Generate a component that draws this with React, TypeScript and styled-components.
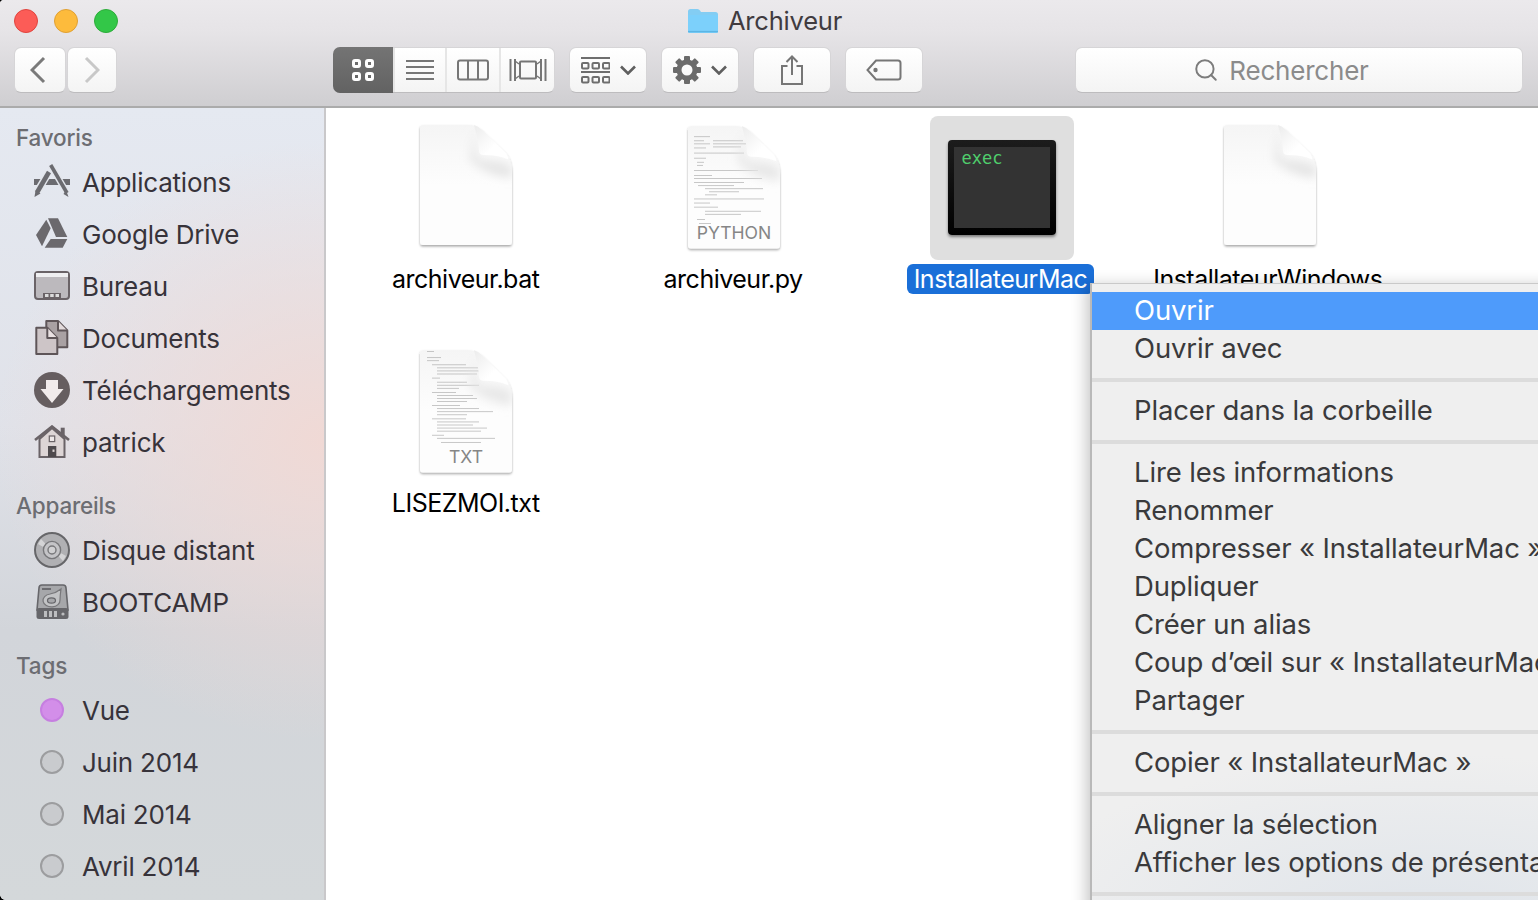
import { useId } from "react";
import styled, { createGlobalStyle } from "styled-components";
import { Search } from "lucide-react";

const GlobalStyle = createGlobalStyle`
  html, body {
    margin: 0;
    padding: 0;
    background: #000;
    overflow: hidden;
  }
  * { box-sizing: border-box; }
  body {
    font-family: Inter, "Liberation Sans", sans-serif;
  }
`;

const Window = styled.div`
  position: relative;
  width: 1538px;
  height: 900px;
  overflow: hidden;
  border-radius: 4px 0 0 6px;
  background: #fff;
  display: flex;
  flex-direction: column;
`;

const Toolbar = styled.header`
  height: 108px;
  flex: none;
  background: linear-gradient(#ebe9ec, #e6e4e7 30%, #cfced1);
  border-bottom: 2px solid #ababab;
  display: flex;
  flex-direction: column;
`;

const TitleRow = styled.div`
  height: 47px;
  padding: 9px 0 0 14px;
  display: grid;
  grid-template-columns: 1fr auto 1fr;
  align-items: start;
`;

const Lights = styled.div`
  display: flex;
  gap: 16px;
`;

const Light = styled.span<{ $bg: string; $line: string }>`
  width: 24px;
  height: 24px;
  border-radius: 50%;
  background: ${(p) => p.$bg};
  border: 1px solid ${(p) => p.$line};
`;

const Title = styled.div`
  display: flex;
  align-items: center;
  gap: 10px;
  margin-right: 22px;
  margin-top: -1px;
  font-size: 25.5px;
  line-height: 26px;
  color: #403b3f;
  letter-spacing: -0.2px;
`;

const Controls = styled.div`
  height: 46px;
  padding: 0 15px 0 14px;
  display: flex;
  align-items: stretch;
`;

const Btn = styled.div<{ $w?: number; $ml?: number; $gap?: number; $pr?: number }>`
  width: ${(p) => p.$w ?? 78}px;
  margin-left: ${(p) => p.$ml ?? 14}px;
  padding-right: ${(p) => p.$pr ?? 0}px;
  gap: ${(p) => p.$gap ?? 0}px;
  display: flex;
  align-items: center;
  justify-content: center;
  background: linear-gradient(#ffffff, #f4f4f4);
  border: 1px solid #d6d5d7;
  border-bottom-color: #bdbcbe;
  border-radius: 7px;
`;

const ViewGroup = styled.div`
  width: 222px;
  margin-left: 216px;
  display: flex;
  background: linear-gradient(#ffffff, #f4f4f4);
  border: 1px solid #d6d5d7;
  border-bottom-color: #bdbcbe;
  border-radius: 7px;
`;

const ViewCell = styled.div<{ $w: number; $on?: boolean }>`
  width: ${(p) => p.$w}px;
  flex: none;
  display: flex;
  align-items: center;
  justify-content: center;
  margin: ${(p) => (p.$on ? "-1px 0 -1px -1px" : "0")};
  border-radius: ${(p) => (p.$on ? "7px 0 0 7px" : "0")};
  background: ${(p) => (p.$on ? "linear-gradient(#747474, #626262)" : "none")};
  & + & {
    border-left: 2px solid #e6e6e6;
  }
`;

const SearchBox = styled(Btn)`
  flex: 1;
  width: auto;
  margin-left: 152px;
  gap: 10px;
  color: #8b8b8b;
  font-size: 26px;
  letter-spacing: -0.2px;
  padding-right: 36px;
`;

const Body = styled.div`
  flex: 1;
  min-height: 0;
  display: flex;
`;

const Sidebar = styled.nav`
  width: 326px;
  flex: none;
  padding-top: 10px;
  border-right: 2px solid #c9c8ca;
  background:
    radial-gradient(ellipse 330px 300px at 100% 42%, #f0d9d5 0%, rgba(240, 217, 213, 0) 100%),
    linear-gradient(#e5e9f1 0%, #e0e2e9 40%, #d2d5da 66%, #d4d8da 100%);
  display: flex;
  flex-direction: column;
  gap: 18px;
`;

const SideHead = styled.div`
  height: 38px;
  padding-left: 16px;
  display: flex;
  align-items: center;
  font-size: 22.5px;
  font-weight: 500;
  color: #6c6d72;
  letter-spacing: -0.2px;
`;

const SideRow = styled.div`
  height: 52px;
  padding-left: 34px;
  display: flex;
  align-items: center;
  gap: 12px;
  font-size: 26px;
  color: #37333a;
  letter-spacing: -0.22px;
`;

const IconBox = styled.span`
  width: 36px;
  height: 36px;
  flex: none;
  display: flex;
  align-items: center;
  justify-content: center;
`;

const TagDot = styled.span<{ $color?: string }>`
  width: 24px;
  height: 24px;
  border-radius: 50%;
  background: ${(p) => p.$color ?? "#c9cbce"};
  border: 2px solid ${(p) => (p.$color ? "#c67fe0" : "#9c9d9f")};
`;

const Files = styled.main`
  flex: 1;
  padding: 8px 0 0 6px;
  display: grid;
  grid-template-columns: repeat(4, 267.4px);
  grid-auto-rows: 224px;
  align-content: start;
`;

const FileItem = styled.div`
  display: flex;
  flex-direction: column;
  align-items: center;
`;

const Thumb = styled.div<{ $selected?: boolean; $nudge?: number }>`
  width: 144px;
  height: 144px;
  flex: none;
  margin-left: ${(p) => p.$nudge ?? 0}px;
  border-radius: 8px;
  background: ${(p) => (p.$selected ? "#dfdfdf" : "transparent")};
  display: flex;
  align-items: center;
  justify-content: center;
`;

const FileName = styled.div<{ $selected?: boolean }>`
  margin-top: 4px;
  height: 30px;
  padding: 0 7px;
  border-radius: 6px;
  font-size: 25px;
  line-height: 30px;
  white-space: nowrap;
  letter-spacing: -0.5px;
  color: ${(p) => (p.$selected ? "#fff" : "#000")};
  background: ${(p) => (p.$selected ? "#1a6fd8" : "transparent")};
`;

const Terminal = styled.div`
  width: 108px;
  height: 95px;
  margin-top: -2px;
  padding: 7px 6px;
  border-radius: 4px;
  background: linear-gradient(#1c1c1c, #000);
  box-shadow: 0 2px 3px rgba(0, 0, 0, 0.45);
  display: flex;
`;

const TerminalScreen = styled.div`
  flex: 1;
  background: #333;
  padding: 0 7px;
  color: #4fce6c;
  font-family: "DejaVu Sans Mono", monospace;
  font-size: 17px;
  line-height: 22px;
`;

const Menu = styled.div`
  position: absolute;
  left: 1090px;
  top: 283px;
  width: 520px;
  height: 640px;
  padding-top: 8px;
  background:
    radial-gradient(ellipse 420px 170px at 65% 100%, #dfe4ea 0%, rgba(223, 228, 234, 0) 100%),
    #efefef;
  border-left: 2px solid #b9b9b9;
  border-top: 1px solid #c9c9c9;
  box-shadow: -4px 2px 14px rgba(0, 0, 0, 0.22);
  font-size: 27.5px;
  color: #3a3a3c;
  letter-spacing: -0.14px;
`;

const MenuItem = styled.div<{ $active?: boolean }>`
  height: 38px;
  padding: 0 0 2px 42px;
  display: flex;
  align-items: center;
  white-space: nowrap;
  color: ${(p) => (p.$active ? "#fff" : "inherit")};
  background: ${(p) => (p.$active ? "#4e9bfb" : "none")};
`;

const MenuLine = styled.div`
  height: 4px;
  margin: 10px 0;
  background: #dcdcdc;
`;

const GREY = "#6a6367";

function FolderIcon() {
  return (
    <svg width="30" height="24" viewBox="0 0 30 24">
      <path d="M0 2.5Q0 0 2.5 0H9.5Q11 0 12 1.5L13 3H27.5Q30 3 30 5.5V22Q30 24 28 24H2Q0 24 0 22Z" fill="#83cdf3" />
      <path d="M0 6H30V22Q30 24 28 24H2Q0 24 0 22Z" fill="#7cd0fb" />
      <path d="M0 22.6H30" stroke="#5cb5e4" strokeWidth="1.4" />
    </svg>
  );
}

function Chevron({ dir, color }: { dir: "l" | "r"; color: string }) {
  return (
    <svg width="16" height="28" viewBox="0 0 16 28">
      <path d={dir === "l" ? "M14 2L2 14L14 26" : "M2 2L14 14L2 26"} fill="none" stroke={color} strokeWidth="3" />
    </svg>
  );
}

function SmallChevron() {
  return (
    <svg width="16" height="10" viewBox="0 0 16 10">
      <path d="M1 1.5L8 8.5L15 1.5" fill="none" stroke="#5f5f5f" strokeWidth="2.6" />
    </svg>
  );
}

function GridIcon() {
  return (
    <svg width="22" height="22" viewBox="0 0 22 22" fill="none" stroke="#fff" strokeWidth="3">
      <rect x="1.5" y="1.5" width="6" height="6" rx="1.5" />
      <rect x="14.5" y="1.5" width="6" height="6" rx="1.5" />
      <rect x="1.5" y="14.5" width="6" height="6" rx="1.5" />
      <rect x="14.5" y="14.5" width="6" height="6" rx="1.5" />
    </svg>
  );
}

function ListIcon() {
  return (
    <svg width="28" height="22" viewBox="0 0 28 22" stroke="#767676" strokeWidth="2">
      {[2, 8, 14, 20].map((y) => (
        <path key={y} d={`M0 ${y}H28`} />
      ))}
    </svg>
  );
}

function ColumnsIcon() {
  return (
    <svg width="32" height="22" viewBox="0 0 32 22" fill="none" stroke="#767676" strokeWidth="2">
      <rect x="1" y="1.5" width="30" height="19" rx="2" />
      <path d="M11 1.5V20.5M21 1.5V20.5" />
    </svg>
  );
}

function CoverIcon() {
  return (
    <svg width="38" height="24" viewBox="0 0 38 24" fill="none" stroke="#767676" strokeWidth="2">
      <rect x="11" y="3.5" width="16" height="17" rx="1" />
      <path d="M1.5 1V23M6 1V23M32 1V23M36.5 1V23" />
      <path d="M6 3L10 6M6 21L10 18M32 3L28 6M32 21L28 18" strokeWidth="1.4" />
    </svg>
  );
}

function ArrangeIcon() {
  const cells = [0, 10.5, 21];
  return (
    <svg width="29" height="27" viewBox="0 0 29 27" fill="none" stroke="#6e6e6e" strokeWidth="2">
      <path d="M0 1H29M0 15H29" />
      {cells.map((x) => (
        <rect key={`a${x}`} x={x + 1} y="6" width="6.5" height="5.5" rx="1" />
      ))}
      {cells.map((x) => (
        <rect key={`b${x}`} x={x + 1} y="20" width="6.5" height="5.5" rx="1" />
      ))}
    </svg>
  );
}

function GearIcon() {
  const teeth = [0, 45, 90, 135, 180, 225, 270, 315];
  return (
    <svg width="28" height="28" viewBox="0 0 28 28">
      {teeth.map((a) => (
        <rect key={a} x="11" y="0" width="6" height="7" rx="1" fill="#6b6b6b" transform={`rotate(${a} 14 14)`} />
      ))}
      <circle cx="14" cy="14" r="8" fill="none" stroke="#6b6b6b" strokeWidth="5" />
    </svg>
  );
}

function ShareIcon() {
  return (
    <svg width="24" height="30" viewBox="0 0 24 30" fill="none" stroke="#767676" strokeWidth="2">
      <path d="M7.5 11H2V29H22V11H16.5" />
      <path d="M12 20V1.5M6.5 7L12 1.5L17.5 7" />
    </svg>
  );
}

function TagIcon() {
  return (
    <svg width="36" height="22" viewBox="0 0 36 22" fill="none" stroke="#767676" strokeWidth="2">
      <path d="M10 1.5H32Q34.5 1.5 34.5 4V18Q34.5 20.5 32 20.5H10L1.5 11Z" />
      <circle cx="9.5" cy="11" r="1.2" fill="#767676" />
    </svg>
  );
}

function AppsIcon() {
  return (
    <svg width="36" height="36" viewBox="0 0 36 36" fill="none">
      <rect x="0" y="15" width="36" height="6" fill="#6b6b70" />
      <path d="M16.7 1L33.5 30" stroke="#e3e6ec" strokeWidth="6.5" />
      <path d="M15 8L2.5 29" stroke="#e3e6ec" strokeWidth="7.5" />
      <path d="M16.7 1L33 29" stroke="#6b6b70" strokeWidth="3.6" />
      <path d="M32 26L34.5 33L29.5 30Z" fill="#6b6b70" />
      <path d="M15 8L3 28.5" stroke="#6b6b70" strokeWidth="4.6" />
      <path d="M0.5 33L1.5 26.5L6.5 29.5Z" fill="#6b6b70" />
    </svg>
  );
}

function DriveIcon() {
  return (
    <svg width="36" height="36" viewBox="0 0 36 36" fill="#6b696d">
      <path d="M14 2.3H24L33.3 21H22Z" />
      <path d="M16.7 23H33.3L28.7 31.7H10.7Z" />
      <path d="M12.3 3.7L16.7 12.3L8 30.3L2 19Z" />
    </svg>
  );
}

function DesktopIcon() {
  return (
    <svg width="36" height="30" viewBox="0 0 36 30">
      <rect x="1" y="1" width="34" height="27" rx="3" fill="#bcb9bd" stroke={GREY} strokeWidth="2" />
      <rect x="2" y="2" width="32" height="4" fill="#efeff1" />
      <rect x="9" y="22" width="18" height="5" fill={GREY} />
      <rect x="11" y="23" width="3.5" height="3" fill="#ddd" />
      <rect x="16.2" y="23" width="3.5" height="3" fill="#ddd" />
      <rect x="21.5" y="23" width="3.5" height="3" fill="#ddd" />
    </svg>
  );
}

function DocsIcon() {
  return (
    <svg width="36" height="36" viewBox="0 0 36 36" stroke="#5e5558" strokeWidth="2" strokeLinejoin="round">
      <path d="M12.3 1H24L33.3 10.5V27.3H20V17.5L12.3 8Z" fill="#a9a1a3" />
      <path d="M24 1V10.5H33.3" fill="#e2dadb" />
      <path d="M2.3 7.7H13.3L23.3 18V34H2.3Z" fill="#cdc5c7" />
      <path d="M13.3 7.7V18H23.3" fill="#e9e1e2" />
    </svg>
  );
}

function DownloadIcon() {
  return (
    <svg width="36" height="36" viewBox="0 0 36 36">
      <circle cx="18" cy="18" r="18" fill="#665e60" />
      <path d="M12 8H24V17H29.5L18 31L6.5 17H12Z" fill="#f1ebeb" />
    </svg>
  );
}

function HomeIcon() {
  return (
    <svg width="36" height="34" viewBox="0 0 36 34">
      <rect x="26.7" y="2.7" width="4" height="9" fill={GREY} />
      <path d="M5.5 14V32H30.5V14L18 3Z" fill="#ddd5d5" stroke={GREY} strokeWidth="2" />
      <path d="M1 15L18 1.5L35 15" fill="none" stroke={GREY} strokeWidth="2.6" />
      <rect x="14" y="21" width="8.3" height="11" fill="#4f4a4d" />
      <rect x="18.5" y="24.5" width="2" height="2.4" fill="#ddd5d5" />
      <rect x="15.3" y="11" width="5.4" height="5.6" fill="#eee8e8" stroke={GREY} strokeWidth="1.2" />
    </svg>
  );
}

function DiscIcon() {
  return (
    <svg width="36" height="36" viewBox="0 0 36 36" fill="none">
      <circle cx="18" cy="18" r="17" fill="#b0b0b3" stroke="#666669" strokeWidth="2" />
      <path d="M7 7L14 14.5L11 16L4 12Z" fill="#d4d4d6" />
      <path d="M29 29L22 21.5L25 20L32 24Z" fill="#d4d4d6" />
      <circle cx="18" cy="18" r="8.6" fill="#c4c4c7" stroke="#77777a" strokeWidth="1.4" />
      <circle cx="18" cy="18" r="4" fill="#d0d0d2" stroke="#77777a" strokeWidth="1.4" />
    </svg>
  );
}

function DriveDiskIcon() {
  return (
    <svg width="33" height="36" viewBox="0 0 33 36">
      <path d="M6 1H27Q30 1 30 4L32 26H1L3 4Q3 1 6 1Z" fill="#a6a7aa" stroke="#66666a" strokeWidth="1.6" />
      <rect x="0.5" y="24" width="32" height="11" rx="2.5" fill="#66666a" />
      <rect x="8" y="27" width="3" height="6" fill="#bcbdbf" />
      <rect x="13" y="27" width="3" height="6" fill="#bcbdbf" />
      <rect x="18" y="27" width="3" height="6" fill="#bcbdbf" />
      <circle cx="27" cy="30" r="1.6" fill="#bcbdbf" />
      <path d="M6 5H15" stroke="#66666a" strokeWidth="1.8" />
      <path d="M25 5Q24 12 24 16A8.5 6.5 0 1 1 14 10Q20 9 25 5Z" fill="#c2c3c5" stroke="#77777a" strokeWidth="1.2" />
      <ellipse cx="15.5" cy="16.5" rx="4" ry="2.6" fill="#a6a7aa" stroke="#66666a" strokeWidth="1.2" />
    </svg>
  );
}

const PY_LINES = [
  [3, 15, 16], [3, 19, 10], [3, 22, 16], [22, 19, 30], [22, 22, 34], [22, 25, 28], [3, 26, 12],
  [3, 31, 50], [3, 36, 12], [6, 40, 7], [6, 43, 6], [3, 48, 64], [3, 53, 18], [3, 56, 68],
  [3, 60, 50], [7, 63, 36], [14, 66, 58], [18, 69, 30], [14, 72, 12], [3, 76, 70], [3, 80, 16],
  [3, 84, 24], [14, 88, 56], [14, 91, 36], [6, 96, 8], [8, 100, 12],
];

const TXT_LINES = [
  [4, 6, 7], [4, 12, 14], [4, 15, 12], [9, 19, 34], [14, 22, 46], [14, 25, 44], [14, 28, 40],
  [9, 32, 8], [14, 36, 30], [14, 39, 42], [14, 42, 22], [9, 46, 24], [14, 49, 36], [14, 52, 40],
  [14, 55, 30], [9, 59, 28], [14, 62, 42], [14, 65, 56], [14, 68, 30], [9, 72, 34], [14, 75, 42],
  [14, 78, 36], [14, 81, 50], [14, 84, 44], [9, 88, 12], [14, 91, 58], [18, 95, 40],
];

function DocIcon({ lines, badge }: { lines?: number[][]; badge?: string }) {
  const id = useId();
  const outline =
    "M29 9H74Q82 9 88 14L112 37Q118 44 118 56V126Q118 129 115 129H29Q26 129 26 126V12Q26 9 29 9Z";
  return (
    <svg width="144" height="144" viewBox="0 0 144 144">
      <defs>
        <linearGradient id={`${id}s`} x1="0" y1="0" x2="0" y2="1">
          <stop offset="0" stopColor="#f5f5f5" />
          <stop offset="0.5" stopColor="#fdfdfd" />
          <stop offset="1" stopColor="#fdfdfd" />
        </linearGradient>
        <linearGradient id={`${id}p`} x1="0" y1="0" x2="1" y2="1">
          <stop offset="0" stopColor="#ececec" />
          <stop offset="0.6" stopColor="#ffffff" />
        </linearGradient>
        <filter id={`${id}f`} x="-10%" y="-10%" width="120%" height="120%">
          <feDropShadow dx="0" dy="1.5" stdDeviation="1.2" floodColor="#000" floodOpacity="0.35" />
        </filter>
        <filter id={`${id}b`} x="-30%" y="-30%" width="160%" height="160%">
          <feGaussianBlur stdDeviation="5" />
        </filter>
        <clipPath id={`${id}c`}>
          <path d={outline} />
        </clipPath>
      </defs>
      <g transform={lines ? "translate(0 1) scale(1 1.02)" : undefined}>
        <path d={outline} fill={`url(#${id}s)`} filter={`url(#${id}f)`} />
        {lines && (
          <g transform="translate(29 0)" fill="#b2b2b2">
            {lines.map(([x, y, w]) => (
              <rect key={`${x}-${y}`} x={x} y={y + 4} width={Math.min(w, 82 - x)} height="0.7" />
            ))}
          </g>
        )}
        <g clipPath={`url(#${id}c)`}>
          <path d="M80 14Q82 34 82 38Q82 44 92 44Q106 44 118 50V62Q92 60 76 44Z" fill="#e6e6e6" filter={`url(#${id}b)`} />
        </g>
        <path d="M80 9Q85 28 85 35Q85 39 90 39Q104 39 113 43Q116 44 112 37L88 14Q84 10 80 9Z" fill={`url(#${id}p)`} />
        {badge && (
          <text x="72" y="120" textAnchor="middle" fontFamily="Inter, sans-serif" fontSize="17.6" fill="#868686">
            {badge}
          </text>
        )}
      </g>
    </svg>
  );
}

function App() {
  return (
    <Window>
      <GlobalStyle />
      <Toolbar>
        <TitleRow>
          <Lights>
            <Light $bg="#fc5c57" $line="#e0443e" />
            <Light $bg="#fdbb3c" $line="#e0a033" />
            <Light $bg="#33c748" $line="#2dac3a" />
          </Lights>
          <Title>
            <FolderIcon />
            Archiveur
          </Title>
        </TitleRow>
        <Controls>
          <Btn $w={52} $ml={0} $pr={4}>
            <Chevron dir="l" color="#7a7a7a" />
          </Btn>
          <Btn $w={50} $ml={1}>
            <Chevron dir="r" color="#c8c8c8" />
          </Btn>
          <ViewGroup>
            <ViewCell $w={60} $on>
              <GridIcon />
            </ViewCell>
            <ViewCell $w={52}>
              <ListIcon />
            </ViewCell>
            <ViewCell $w={54}>
              <ColumnsIcon />
            </ViewCell>
            <ViewCell $w={55}>
              <CoverIcon />
            </ViewCell>
          </ViewGroup>
          <Btn $gap={10}>
            <ArrangeIcon />
            <SmallChevron />
          </Btn>
          <Btn $gap={10}>
            <GearIcon />
            <SmallChevron />
          </Btn>
          <Btn>
            <ShareIcon />
          </Btn>
          <Btn>
            <TagIcon />
          </Btn>
          <SearchBox>
            <Search size={26} color="#7c7c7c" strokeWidth={1.8} />
            Rechercher
          </SearchBox>
        </Controls>
      </Toolbar>
      <Body>
        <Sidebar>
          <section>
            <SideHead>Favoris</SideHead>
            <SideRow><IconBox><AppsIcon /></IconBox>Applications</SideRow>
            <SideRow><IconBox><DriveIcon /></IconBox>Google Drive</SideRow>
            <SideRow><IconBox><DesktopIcon /></IconBox>Bureau</SideRow>
            <SideRow><IconBox><DocsIcon /></IconBox>Documents</SideRow>
            <SideRow><IconBox><DownloadIcon /></IconBox>Téléchargements</SideRow>
            <SideRow><IconBox><HomeIcon /></IconBox>patrick</SideRow>
          </section>
          <section>
            <SideHead>Appareils</SideHead>
            <SideRow><IconBox><DiscIcon /></IconBox>Disque distant</SideRow>
            <SideRow><IconBox><DriveDiskIcon /></IconBox>BOOTCAMP</SideRow>
          </section>
          <section>
            <SideHead>Tags</SideHead>
            <SideRow><IconBox><TagDot $color="#d38ee9" /></IconBox>Vue</SideRow>
            <SideRow><IconBox><TagDot /></IconBox>Juin 2014</SideRow>
            <SideRow><IconBox><TagDot /></IconBox>Mai 2014</SideRow>
            <SideRow><IconBox><TagDot /></IconBox>Avril 2014</SideRow>
          </section>
        </Sidebar>
        <Files>
          <FileItem>
            <Thumb><DocIcon /></Thumb>
            <FileName>archiveur.bat</FileName>
          </FileItem>
          <FileItem>
            <Thumb $nudge={2}><DocIcon lines={PY_LINES} badge="PYTHON" /></Thumb>
            <FileName>archiveur.py</FileName>
          </FileItem>
          <FileItem>
            <Thumb $selected $nudge={4}>
              <Terminal>
                <TerminalScreen>exec</TerminalScreen>
              </Terminal>
            </Thumb>
            <FileName $selected>InstallateurMac</FileName>
          </FileItem>
          <FileItem>
            <Thumb $nudge={4}><DocIcon /></Thumb>
            <FileName>InstallateurWindows</FileName>
          </FileItem>
          <FileItem>
            <Thumb><DocIcon lines={TXT_LINES} badge="TXT" /></Thumb>
            <FileName>LISEZMOI.txt</FileName>
          </FileItem>
        </Files>
      </Body>
      <Menu>
        <MenuItem $active>Ouvrir</MenuItem>
        <MenuItem>Ouvrir avec</MenuItem>
        <MenuLine />
        <MenuItem>Placer dans la corbeille</MenuItem>
        <MenuLine />
        <MenuItem>Lire les informations</MenuItem>
        <MenuItem>Renommer</MenuItem>
        <MenuItem>Compresser « InstallateurMac »</MenuItem>
        <MenuItem>Dupliquer</MenuItem>
        <MenuItem>Créer un alias</MenuItem>
        <MenuItem>Coup d’œil sur « InstallateurMac »</MenuItem>
        <MenuItem>Partager</MenuItem>
        <MenuLine />
        <MenuItem>Copier « InstallateurMac »</MenuItem>
        <MenuLine />
        <MenuItem>Aligner la sélection</MenuItem>
        <MenuItem>Afficher les options de présentation</MenuItem>
        <MenuLine />
      </Menu>
    </Window>
  );
}

export default App;
